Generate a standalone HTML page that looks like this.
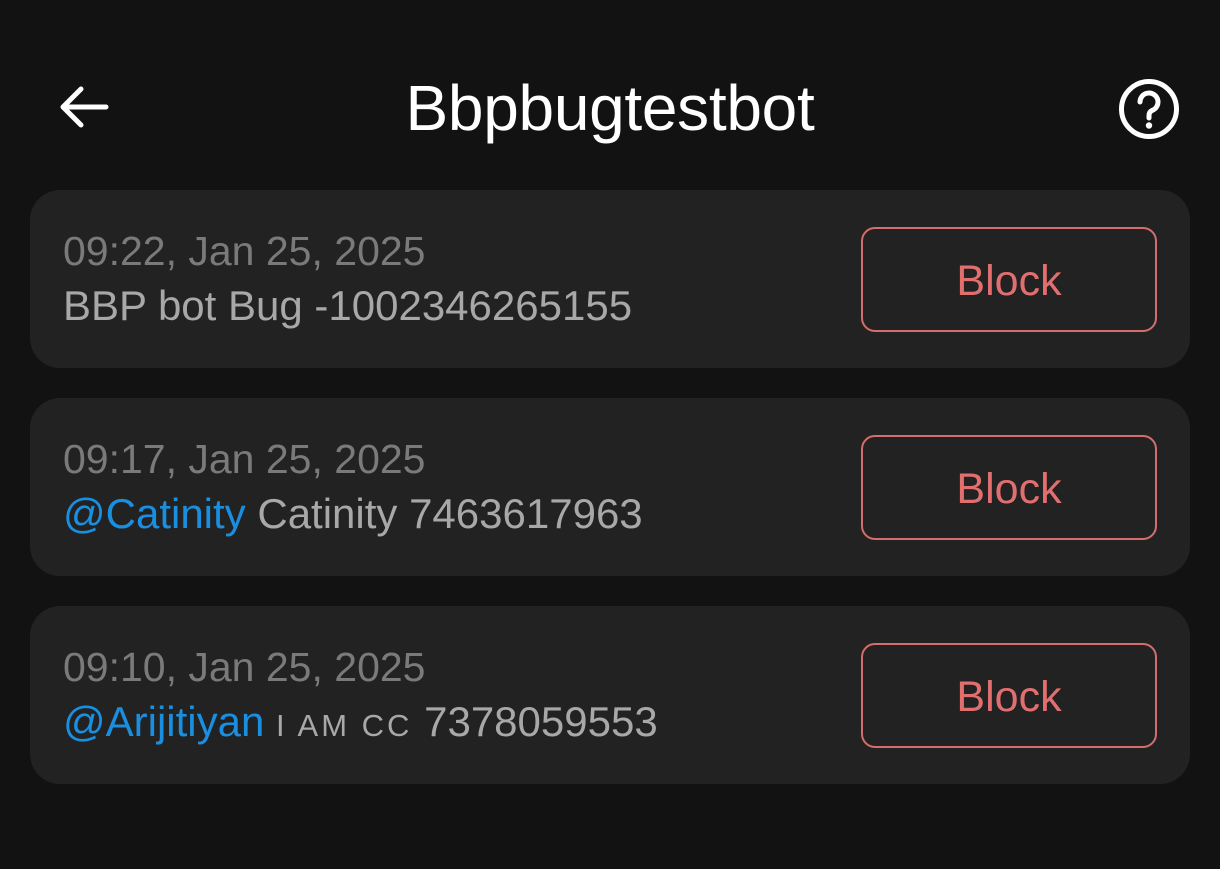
<!DOCTYPE html>
<html><head><meta charset="utf-8"><style>
body{margin:0;width:1220px;height:869px;background:#121212;font-family:"Liberation Sans","DejaVu Sans",sans-serif;overflow:hidden;position:relative}
.title{position:absolute;top:70px;left:0;width:1220px;text-align:center;color:#fff;font-size:64px;line-height:76px;letter-spacing:-0.3px}
.card{position:absolute;left:30px;width:1160px;height:178px;background:#222;border-radius:30px}
.d{position:absolute;left:33px;top:39px;color:#7a7a7a;font-size:41px;line-height:44px}
.n{position:absolute;left:33px;top:94px;color:#a8a8a8;font-size:42px;line-height:44px;white-space:nowrap}
.u{color:#1a8fe0}
.sc{font-size:31px;letter-spacing:3px}
.b{position:absolute;left:831px;top:37px;width:292px;height:101px;border:2px solid #d46d6d;border-radius:14px;color:#e26f6f;font-size:43px;line-height:101px;text-align:center}
.b span{position:relative;top:2px}
</style></head><body>
<svg style="position:absolute;left:56px;top:80px" width="56" height="56" viewBox="0 0 56 56"><path d="M50 27H8M25 9L7 27L25 45" stroke="#fff" stroke-width="5" fill="none" stroke-linecap="round" stroke-linejoin="round"/></svg>
<div class="title">Bbpbugtestbot</div>
<svg style="position:absolute;left:1117px;top:77px" width="64" height="64" viewBox="0 0 64 64"><circle cx="32" cy="32" r="27.5" stroke="#fff" stroke-width="5" fill="none"/><path d="M23 25a9 9 0 1 1 12 8.5c-2 1-3 2.5-3 5V41" stroke="#fff" stroke-width="5" fill="none" stroke-linecap="round"/><circle cx="32" cy="48.5" r="3.2" fill="#fff"/></svg>
<div class="card" style="top:190px"><div class="d">09:22, Jan 25, 2025</div><div class="n">BBP bot Bug -1002346265155</div><div class="b"><span>Block</span></div></div>
<div class="card" style="top:398px"><div class="d">09:17, Jan 25, 2025</div><div class="n"><span class="u">@Catinity</span> Catinity 7463617963</div><div class="b"><span>Block</span></div></div>
<div class="card" style="top:606px"><div class="d">09:10, Jan 25, 2025</div><div class="n"><span class="u">@Arijitiyan</span> <span class="sc">I AM CC</span> 7378059553</div><div class="b"><span>Block</span></div></div>
</body></html>
